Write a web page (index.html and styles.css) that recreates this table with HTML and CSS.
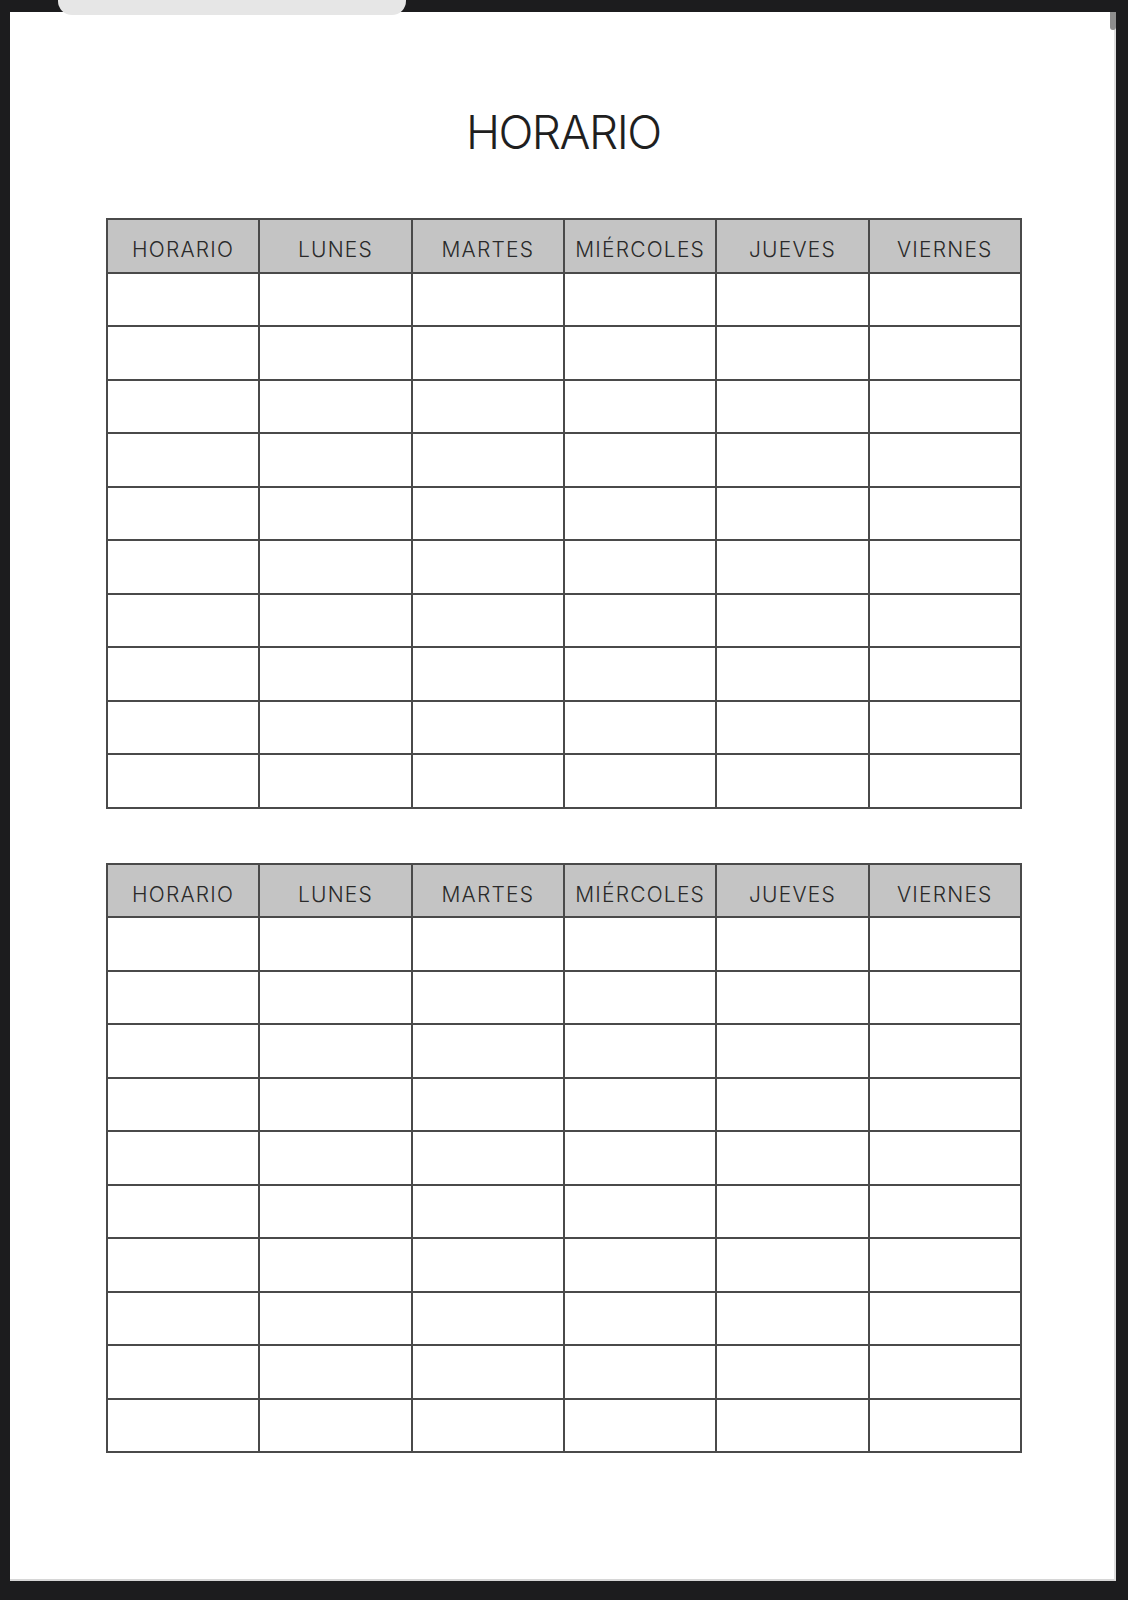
FILE: index.html
```html
<!DOCTYPE html>
<html lang="es">
<head>
<meta charset="utf-8">
<title>Horario</title>
<link rel="stylesheet" href="styles.css">
</head>
<body>
<div class="screen">
  <div class="pill"></div>
  <div class="page">
    <div class="scroll-thumb"></div>
    <h1 class="title">HORARIO</h1>

    <div class="schedule">
      <div class="cell head">HORARIO</div>
      <div class="cell head">LUNES</div>
      <div class="cell head">MARTES</div>
      <div class="cell head">MIÉRCOLES</div>
      <div class="cell head">JUEVES</div>
      <div class="cell head">VIERNES</div>
      <div class="cell"></div><div class="cell"></div><div class="cell"></div><div class="cell"></div><div class="cell"></div><div class="cell"></div>
      <div class="cell"></div><div class="cell"></div><div class="cell"></div><div class="cell"></div><div class="cell"></div><div class="cell"></div>
      <div class="cell"></div><div class="cell"></div><div class="cell"></div><div class="cell"></div><div class="cell"></div><div class="cell"></div>
      <div class="cell"></div><div class="cell"></div><div class="cell"></div><div class="cell"></div><div class="cell"></div><div class="cell"></div>
      <div class="cell"></div><div class="cell"></div><div class="cell"></div><div class="cell"></div><div class="cell"></div><div class="cell"></div>
      <div class="cell"></div><div class="cell"></div><div class="cell"></div><div class="cell"></div><div class="cell"></div><div class="cell"></div>
      <div class="cell"></div><div class="cell"></div><div class="cell"></div><div class="cell"></div><div class="cell"></div><div class="cell"></div>
      <div class="cell"></div><div class="cell"></div><div class="cell"></div><div class="cell"></div><div class="cell"></div><div class="cell"></div>
      <div class="cell"></div><div class="cell"></div><div class="cell"></div><div class="cell"></div><div class="cell"></div><div class="cell"></div>
      <div class="cell"></div><div class="cell"></div><div class="cell"></div><div class="cell"></div><div class="cell"></div><div class="cell"></div>
    </div>

    <div class="schedule second">
      <div class="cell head">HORARIO</div>
      <div class="cell head">LUNES</div>
      <div class="cell head">MARTES</div>
      <div class="cell head">MIÉRCOLES</div>
      <div class="cell head">JUEVES</div>
      <div class="cell head">VIERNES</div>
      <div class="cell"></div><div class="cell"></div><div class="cell"></div><div class="cell"></div><div class="cell"></div><div class="cell"></div>
      <div class="cell"></div><div class="cell"></div><div class="cell"></div><div class="cell"></div><div class="cell"></div><div class="cell"></div>
      <div class="cell"></div><div class="cell"></div><div class="cell"></div><div class="cell"></div><div class="cell"></div><div class="cell"></div>
      <div class="cell"></div><div class="cell"></div><div class="cell"></div><div class="cell"></div><div class="cell"></div><div class="cell"></div>
      <div class="cell"></div><div class="cell"></div><div class="cell"></div><div class="cell"></div><div class="cell"></div><div class="cell"></div>
      <div class="cell"></div><div class="cell"></div><div class="cell"></div><div class="cell"></div><div class="cell"></div><div class="cell"></div>
      <div class="cell"></div><div class="cell"></div><div class="cell"></div><div class="cell"></div><div class="cell"></div><div class="cell"></div>
      <div class="cell"></div><div class="cell"></div><div class="cell"></div><div class="cell"></div><div class="cell"></div><div class="cell"></div>
      <div class="cell"></div><div class="cell"></div><div class="cell"></div><div class="cell"></div><div class="cell"></div><div class="cell"></div>
      <div class="cell"></div><div class="cell"></div><div class="cell"></div><div class="cell"></div><div class="cell"></div><div class="cell"></div>
    </div>
  </div>
</div>
</body>
</html>
```

FILE: styles.css
```css
html, body {
  margin: 0;
  padding: 0;
}

body {
  background: #1c1c1e;
  font-family: Inter, "Noto Sans", "Liberation Sans", sans-serif;
  color: #2b2b2b;
}

.screen {
  position: relative;
  width: 1128px;
  height: 1600px;
  padding-top: 12px;
  padding-left: 10px;
  box-sizing: border-box;
}

.pill {
  position: absolute;
  left: 58px;
  top: 0;
  width: 348px;
  height: 15px;
  background: #e6e6e6;
  border-radius: 0 0 14px 14px;
  z-index: 2;
}

.page {
  position: relative;
  width: 1106px;
  height: 1569px;
  box-sizing: border-box;
  background: #ffffff;
  border-right: 2px solid #dedede;
  border-bottom: 2px solid #d6d6d6;
  padding-top: 97px;
  padding-left: 96px;
}

.scroll-thumb {
  position: absolute;
  right: -2px;
  top: 0;
  width: 6px;
  height: 18px;
  background: #8e8e8e;
  border-radius: 0 0 3px 3px;
}

.title {
  margin: 0;
  width: 916px;
  text-align: center;
  font-size: 46px;
  line-height: 46px;
  font-weight: 300;
  letter-spacing: -1.5px;
  text-indent: -1.5px;
  color: #1f1f1f;
}

.schedule {
  display: grid;
  grid-template-columns: repeat(6, 152.33px);
  grid-auto-rows: 53.5px;
  width: 916px;
  box-sizing: border-box;
  margin-top: 63px;
  border-left: 2px solid #4a4a4a;
  border-top: 2px solid #4a4a4a;
}

.schedule.second {
  margin-top: 54px;
}

.cell {
  border-right: 2px solid #4a4a4a;
  border-bottom: 2px solid #4a4a4a;
  background: #ffffff;
}

.cell.head {
  background: #c4c4c4;
  display: flex;
  justify-content: center;
  padding-top: 19px;
  font-size: 21px;
  line-height: 21px;
  font-weight: 300;
  color: #2a2a2a;
  letter-spacing: 1.2px;
}
```
